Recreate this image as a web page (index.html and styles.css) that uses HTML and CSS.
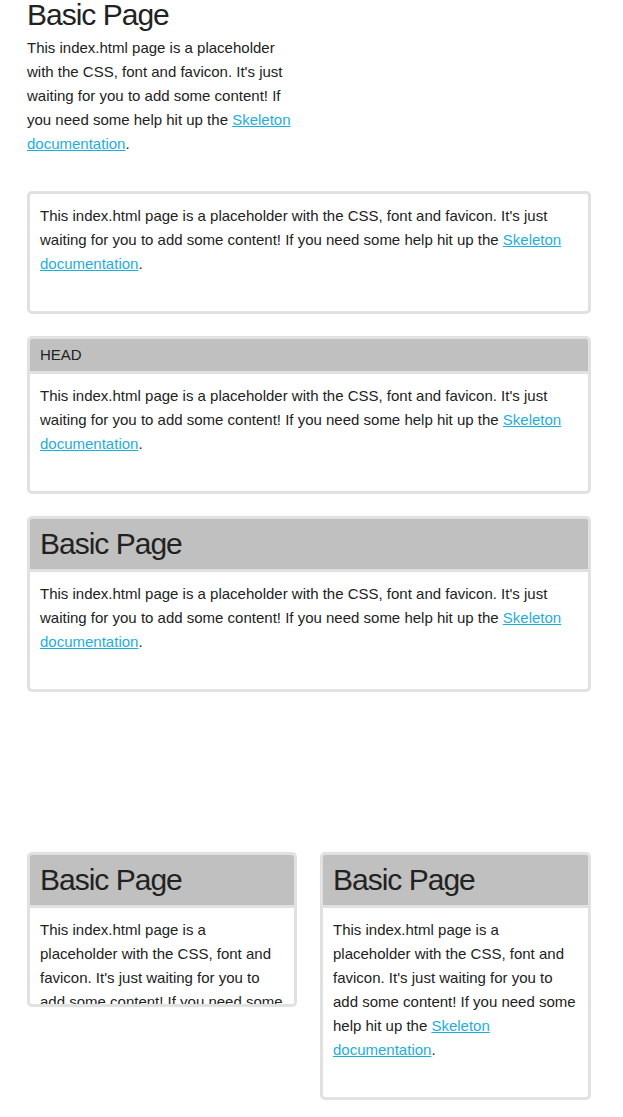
FILE: index.html
```html
<!DOCTYPE html>
<html lang="en">
<head>
<meta charset="utf-8">
<title>Basic Page</title>
<link rel="stylesheet" href="styles.css">
</head>
<body>
<div class="container">
  <div class="intro">
    <h1 class="title">Basic Page</h1>
    <p class="text intro-text">This index.html page is a placeholder with the CSS, font and favicon. It's just waiting for you to add some content! If you need some help hit up the <a href="#">Skeleton documentation</a>.</p>
  </div>

  <div class="card">
    <div class="card-body">
      <p class="text">This index.html page is a placeholder with the CSS, font and favicon. It's just waiting for you to add some content! If you need some help hit up the <a href="#">Skeleton documentation</a>.</p>
    </div>
  </div>

  <div class="card">
    <div class="card-head">HEAD</div>
    <div class="card-body">
      <p class="text">This index.html page is a placeholder with the CSS, font and favicon. It's just waiting for you to add some content! If you need some help hit up the <a href="#">Skeleton documentation</a>.</p>
    </div>
  </div>

  <div class="card">
    <div class="card-head"><h1 class="title head-title">Basic Page</h1></div>
    <div class="card-body">
      <p class="text">This index.html page is a placeholder with the CSS, font and favicon. It's just waiting for you to add some content! If you need some help hit up the <a href="#">Skeleton documentation</a>.</p>
    </div>
  </div>

  <div class="row">
    <div class="card card-fixed">
      <div class="card-head"><h1 class="title head-title">Basic Page</h1></div>
      <div class="card-body">
        <p class="text">This index.html page is a placeholder with the CSS, font and favicon. It's just waiting for you to add some content! If you need some help hit up the <a href="#">Skeleton documentation</a>.</p>
      </div>
    </div>
    <div class="card">
      <div class="card-head"><h1 class="title head-title">Basic Page</h1></div>
      <div class="card-body">
        <p class="text">This index.html page is a placeholder with the CSS, font and favicon. It's just waiting for you to add some content! If you need some help hit up the <a href="#">Skeleton documentation</a>.</p>
      </div>
    </div>
  </div>
</div>
</body>
</html>
```

FILE: styles.css
```css
html, body {
  margin: 0;
  padding: 0;
  background: #ffffff;
}

body {
  font-family: "Liberation Sans", Arial, Helvetica, sans-serif;
  font-size: 15px;
  line-height: 24px;
  color: #222222;
}

a {
  color: #1eaedb;
  text-decoration: underline;
}

.container {
  width: 564px;
  margin-left: 27px;
  display: flex;
  flex-direction: column;
  align-items: stretch;
}

.intro {
  width: 270px;
  margin-bottom: 35px;
}

.title {
  margin: 0 0 6px;
  font-size: 30px;
  line-height: 30px;
  font-weight: 400;
  letter-spacing: -1px;
}

.text {
  margin: 0;
}

.card {
  box-sizing: border-box;
  border: 3px solid #e1e1e1;
  border-radius: 5px;
  overflow: hidden;
  margin-bottom: 22px;
  background: #ffffff;
}

.card-head {
  background: #c0c0c0;
  border-bottom: 3px solid #e1e1e1;
  padding: 4px 10px;
  line-height: 24px;
}

.head-title {
  margin: 6px 0;
}

.card-body {
  padding: 10px 10px 35px;
}

.row {
  display: grid;
  grid-template-columns: 270px 271px;
  column-gap: 23px;
  align-items: start;
  margin-top: 138px;
}

.row .card {
  margin-bottom: 0;
}

.card-fixed {
  height: 155px;
}
```
